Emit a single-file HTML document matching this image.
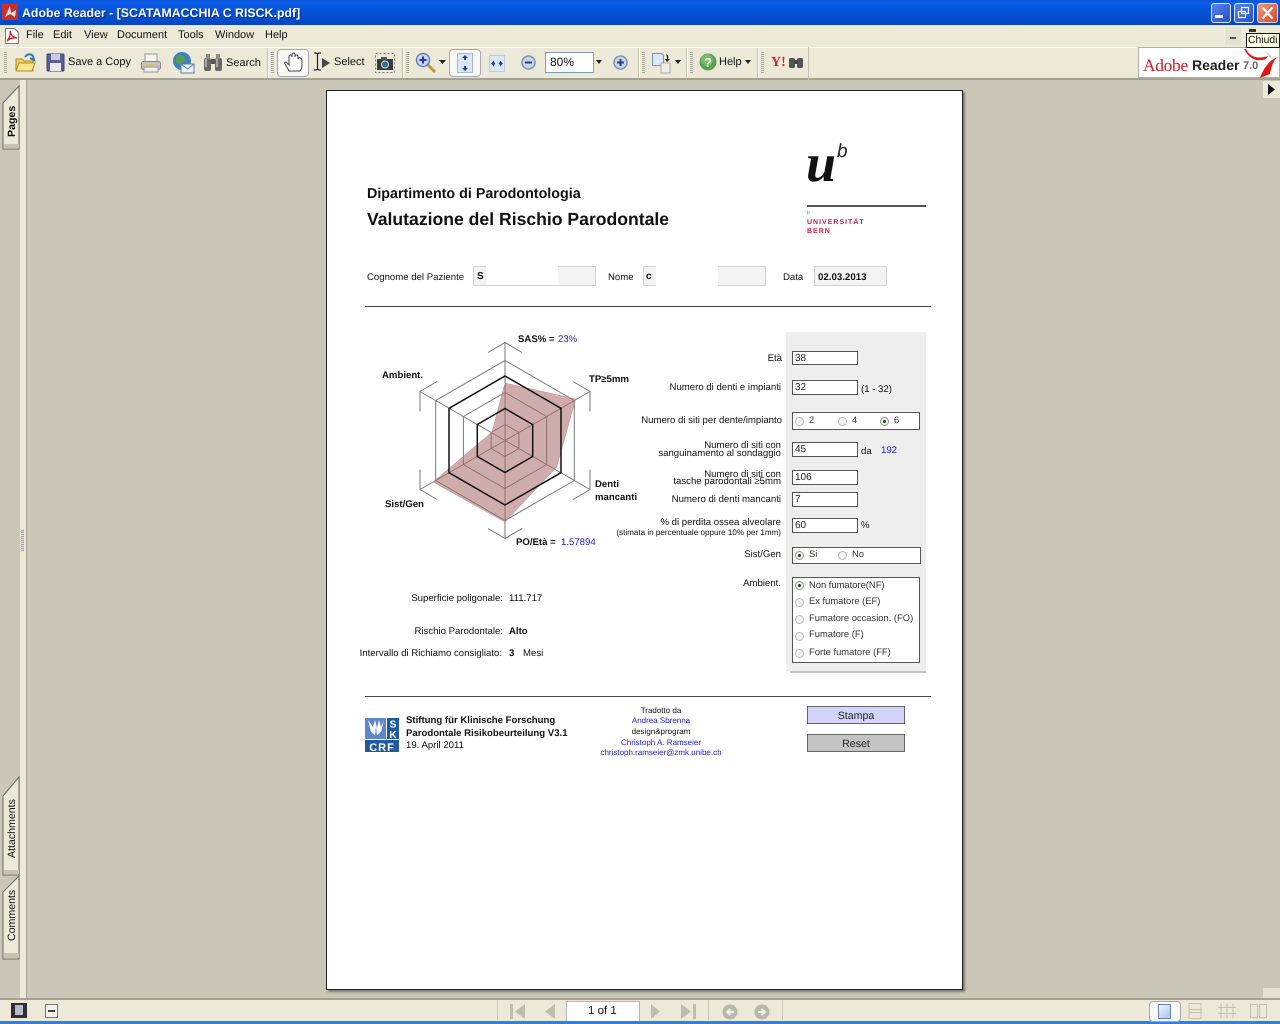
<!DOCTYPE html>
<html><head><meta charset="utf-8"><title>Adobe Reader</title>
<style>
html,body{margin:0;padding:0;width:1280px;height:1024px;overflow:hidden;background:#CBC7B8;font-family:"Liberation Sans",sans-serif;text-rendering:geometricPrecision;}
.a{position:absolute;}
.t{position:absolute;white-space:nowrap;color:#111;font-size:9.6px;line-height:12px;}
.r{text-align:right;}
.b{font-weight:bold;}
.blue{color:#2222cc;}
.ui{font-size:11px;color:#111;}
.fld{position:absolute;background:#fff;border:1px solid #555;box-sizing:border-box;font-size:10px;line-height:13px;padding-left:2px;color:#222;}
.rad{position:absolute;width:9px;height:9px;border-radius:50%;border:1px solid #bbb;background:#f3f3f3;box-sizing:border-box;}
.on{border-color:#8a9a8a;}
.on:after{content:"";position:absolute;left:2px;top:2px;width:3px;height:3px;border-radius:50%;background:#1c3c1c;}
.sep{position:absolute;top:48px;height:30px;width:1px;background:#c5c2b2;border-right:1px solid #fff;}
.grip{position:absolute;top:52px;height:22px;width:3px;background:repeating-linear-gradient(#aaa79a 0 1px,transparent 1px 2px);}
.vt{position:absolute;white-space:nowrap;transform-origin:0 0;transform:rotate(-90deg);font-size:10.6px;color:#111;line-height:14px;}
.l{color:#333;font-size:9.4px;}
</style></head><body>

<!-- title bar -->
<div class="a" style="left:0;top:0;width:1280px;height:25px;background:linear-gradient(#0a56dc 0,#0a5ce8 3px,#0453d8 12px,#0148c8 22px,#0a45b5 25px);"></div>
<svg class="a" style="left:2px;top:4px" width="16" height="16" viewBox="0 0 16 16"><rect width="16" height="16" fill="#c8302a"/><path d="M3 13 L8 2 L9 9 L14 6 L13 13 L8 10 Z" fill="#f2e0d8"/></svg>
<div class="t b" style="left:22px;top:5px;font-size:12.35px;line-height:16px;color:#fff;text-shadow:1px 1px 0 #0a2f8c;">Adobe Reader - [SCATAMACCHIA C RISCK.pdf]</div>
<div class="a" style="left:1211px;top:3px;width:20px;height:20px;border-radius:3px;border:1px solid #dfe8fa;box-sizing:border-box;background:linear-gradient(135deg,#5a83ec,#2450cc);"></div>
<div class="a" style="left:1215px;top:15px;width:8px;height:3px;background:#fff;"></div>
<div class="a" style="left:1234px;top:3px;width:20px;height:20px;border-radius:3px;border:1px solid #dfe8fa;box-sizing:border-box;background:linear-gradient(135deg,#5a83ec,#2450cc);"></div>
<svg class="a" style="left:1237px;top:6px" width="14" height="14"><path d="M4.5 1.5h7v6h-7zM1.5 5.5h7v6h-7z" fill="none" stroke="#fff" stroke-width="1.2"/></svg>
<div class="a" style="left:1257px;top:3px;width:21px;height:20px;border-radius:3px;border:1px solid #f5e0da;box-sizing:border-box;background:linear-gradient(135deg,#ee9a7e,#d9482a);"></div>
<svg class="a" style="left:1260px;top:6px" width="15" height="14"><path d="M2.5 1.5L12.5 12.5M12.5 1.5L2.5 12.5" stroke="#fff" stroke-width="2.2"/></svg>

<!-- menu -->
<div class="a" style="left:0;top:25px;width:1280px;height:22px;background:#ECE9D8;"></div>
<svg class="a" style="left:4px;top:27px" width="16" height="18" viewBox="0 0 16 18"><path d="M1.5 1.5h9l4 4v11h-13z" fill="#fff" stroke="#777"/><path d="M3 14 Q7 9 6 4 Q7 10 13 11 Q7 10 3 14z" fill="none" stroke="#d02020" stroke-width="1.3"/></svg>
<div class="t ui" style="left:26px;top:29px">File</div>
<div class="t ui" style="left:53px;top:29px">Edit</div>
<div class="t ui" style="left:84px;top:29px">View</div>
<div class="t ui" style="left:117px;top:29px">Document</div>
<div class="t ui" style="left:178px;top:29px">Tools</div>
<div class="t ui" style="left:215px;top:29px">Window</div>
<div class="t ui" style="left:265px;top:29px">Help</div>
<div class="a" style="left:1225px;top:27px;width:16px;height:18px;background:#e4e1d0;"></div>
<div class="a" style="left:1230px;top:37px;width:6px;height:2px;background:#555;"></div>
<div class="a" style="left:1249px;top:29px;width:7px;height:3px;background:#333;"></div>

<!-- toolbar -->
<div class="a" style="left:0;top:47px;width:1280px;height:33px;background:#ECE9D8;border-top:1px solid #fff;border-bottom:2px solid #a5a292;box-sizing:border-box;"></div>
<div class="grip" style="left:4px"></div>
<svg class="a" style="left:14px;top:51px" width="22" height="22" viewBox="0 0 22 22"><path d="M2 8h6l2 2h9v10H2z" fill="#f2d060" stroke="#b08a20"/><path d="M2 20l3-8h16l-3 8z" fill="#fbe68c" stroke="#b08a20"/><path d="M11 6Q15 1 19 5l1 4-4-2" fill="none" stroke="#2f7fae" stroke-width="2"/></svg>
<svg class="a" style="left:46px;top:53px" width="19" height="19" viewBox="0 0 19 19"><rect x="1" y="1" width="17" height="17" rx="1" fill="#5a5f9a" stroke="#3d4070"/><rect x="5" y="1" width="9" height="6" fill="#c9cce4"/><rect x="4" y="10" width="11" height="8" fill="#e8e8ee"/></svg>
<div class="t ui" style="left:68px;top:56px">Save a Copy</div>
<svg class="a" style="left:140px;top:52px" width="22" height="22" viewBox="0 0 22 22"><rect x="5" y="2" width="12" height="8" fill="#f4f4f4" stroke="#999"/><rect x="1.500" y="9.500" width="19" height="8" rx="2" fill="#c6c6c6" stroke="#888"/><rect x="4" y="15" width="14" height="5" fill="#eee" stroke="#999"/><rect x="6" y="12" width="8" height="2" fill="#e0c040"/></svg>
<svg class="a" style="left:172px;top:51px" width="23" height="23" viewBox="0 0 23 23"><circle cx="10" cy="10" r="9" fill="#3f80c4"/><path d="M4 6q5-4 8 0t-3 6-5-6z" fill="#5aa04a"/><rect x="9" y="13" width="13" height="9" fill="#eef3fa" stroke="#5b7ea8"/><path d="M9 13l6.500 5 6.500-5" fill="none" stroke="#5b7ea8"/></svg>
<svg class="a" style="left:203px;top:53px" width="20" height="19" viewBox="0 0 20 19"><rect x="1" y="5" width="7" height="13" rx="2" fill="#6a6a62"/><rect x="12" y="5" width="7" height="13" rx="2" fill="#6a6a62"/><rect x="3" y="1" width="4" height="5" fill="#8c8c82"/><rect x="13" y="1" width="4" height="5" fill="#8c8c82"/><rect x="8" y="6" width="4" height="5" fill="#555"/><rect x="2" y="6" width="2" height="8" fill="#aaa"/><rect x="13" y="6" width="2" height="8" fill="#aaa"/></svg>
<div class="t ui" style="left:226px;top:57px">Search</div>
<div class="sep" style="left:267px"></div>
<div class="grip" style="left:271px"></div>
<div class="a" style="left:277px;top:49px;width:32px;height:28px;background:#f8f8f4;border:1px solid #a8a8b4;border-radius:4px;box-sizing:border-box;"></div>
<svg class="a" style="left:282px;top:52px" width="22" height="22" viewBox="0 0 22 22"><path d="M7 19Q5 15 3 12q-1-2 1-2l3 3V5q0-2 1.500-2T10 5V3q0-2 1.500-2T13 3v2q0-2 1.500-2T16 5v2q1-2 2.500-1T20 8v5q0 4-2 6z" fill="#fff" stroke="#444" stroke-width="1"/></svg>
<svg class="a" style="left:312px;top:52px" width="20" height="20" viewBox="0 0 20 20"><path d="M2 1h2l1.500 1L7 1h2M5.500 2v15M2 18h2l1.500-1L7 18h2" fill="none" stroke="#222" stroke-width="1.200"/><path d="M10 6l8 5-8 5z" fill="#444"/></svg>
<div class="t ui" style="left:334px;top:56px">Select</div>
<svg class="a" style="left:375px;top:53px" width="20" height="20" viewBox="0 0 20 20"><rect x=".5" y=".5" width="19" height="19" fill="none" stroke="#777" stroke-dasharray="2 2"/><rect x="2" y="6" width="16" height="11" fill="#3a3a3a"/><rect x="6" y="4" width="6" height="3" fill="#555"/><circle cx="10" cy="11.500" r="3.500" fill="#2d6d9a" stroke="#ddd"/></svg>
<div class="sep" style="left:402px"></div>
<div class="grip" style="left:406px"></div>
<svg class="a" style="left:415px;top:52px" width="22" height="22" viewBox="0 0 22 22"><path d="M12 12l8 8" stroke="#b89b30" stroke-width="3"/><circle cx="8" cy="8" r="6.500" fill="#c8d8f4" stroke="#6b82b8" stroke-width="1.500"/><path d="M4.500 8h7M8 4.500v7" stroke="#233a8c" stroke-width="2"/></svg>
<svg class="a" style="left:439px;top:60px" width="7" height="4"><path d="M0 0h7L3.500 4z" fill="#222"/></svg>
<div class="a" style="left:449px;top:49px;width:32px;height:28px;background:#f8f8f4;border:1px solid #a8a8b4;border-radius:4px;box-sizing:border-box;"></div>
<svg class="a" style="left:457px;top:53px" width="16" height="20" viewBox="0 0 16 20"><rect x=".5" y=".5" width="15" height="19" fill="#dbe6f6" stroke="#aab8cc"/><path d="M8 2l-3 3h2v2h2V5h2zM8 18l-3-3h2v-2h2v2h2z" fill="#26477c"/></svg>
<svg class="a" style="left:489px;top:55px" width="16" height="17" viewBox="0 0 16 17"><rect x=".5" y=".5" width="15" height="16" fill="#dbe6f6" stroke="#c0cce0"/><path d="M2 8.500l3-3v2h1v2H5v2zM14 8.500l-3-3v2h-1v2h1v2z" fill="#26477c"/></svg>
<svg class="a" style="left:521px;top:55px" width="15" height="15"><circle cx="7.500" cy="7.500" r="6.500" fill="#c8d6ea" stroke="#7d92b8" stroke-width="1.500"/><path d="M4 7.500h7" stroke="#2a3f7a" stroke-width="2"/></svg>
<div class="a" style="left:545px;top:52px;width:49px;height:21px;background:#fff;border:1px solid #7f9db9;box-sizing:border-box;"></div>
<div class="t ui" style="left:550px;top:56px;font-size:12px;line-height:13px">80%</div>
<svg class="a" style="left:596px;top:60px" width="6" height="4"><path d="M0 0h6L3 4z" fill="#222"/></svg>
<svg class="a" style="left:613px;top:55px" width="15" height="15"><circle cx="7.500" cy="7.500" r="6.500" fill="#c8d6ea" stroke="#7d92b8" stroke-width="1.500"/><path d="M4 7.500h7M7.500 4v7" stroke="#2a3f7a" stroke-width="2"/></svg>
<div class="sep" style="left:638px"></div>
<div class="grip" style="left:642px"></div>
<svg class="a" style="left:651px;top:52px" width="22" height="22" viewBox="0 0 22 22"><path d="M1.500 1.500h9l2 2v10h-11z" fill="#dbe6f6" stroke="#7d92b8"/><path d="M10 11h9v10H10z" fill="#f0eee4" stroke="#aaa"/><path d="M15 2q3 1 2 5l2 0-3 3-2-3h2q0-3-1-5z" fill="#222"/></svg>
<svg class="a" style="left:675px;top:60px" width="6" height="4"><path d="M0 0h6L3 4z" fill="#222"/></svg>
<div class="sep" style="left:686px"></div>
<div class="grip" style="left:690px"></div>
<svg class="a" style="left:699px;top:53px" width="18" height="18"><circle cx="9" cy="9" r="8.500" fill="#5aa050"/><circle cx="8" cy="7" r="6" fill="#8ccb7c" opacity=".6"/><text x="9" y="14" text-anchor="middle" font-size="13" font-weight="bold" font-family="Liberation Sans" fill="#fff">?</text></svg>
<div class="t ui" style="left:719px;top:56px">Help</div>
<svg class="a" style="left:745px;top:60px" width="6" height="4"><path d="M0 0h6L3 4z" fill="#222"/></svg>
<div class="sep" style="left:757px"></div>
<div class="grip" style="left:761px"></div>
<div class="t b" style="left:771px;top:55px;font-family:'Liberation Serif',serif;font-size:14px;line-height:15px;color:#d81e2c">Y!</div>
<svg class="a" style="left:789px;top:55px" width="14" height="14" viewBox="0 0 14 14"><rect x="0" y="3" width="6" height="10" rx="1.500" fill="#555"/><rect x="8" y="3" width="6" height="10" rx="1.500" fill="#555"/><rect x="5" y="5" width="4" height="4" fill="#444"/></svg>
<div class="a" style="left:808px;top:47px;width:1px;height:33px;background:#c5c2b2;"></div>

<!-- adobe reader badge -->
<div class="a" style="left:1138px;top:47px;width:142px;height:31px;background:#fff;border:1px solid #b5b2a5;box-sizing:border-box;overflow:hidden;"></div>
<div class="t" style="left:1143px;top:56px;font-family:'Liberation Serif',serif;font-size:17.4px;line-height:19px;color:#c8202c;letter-spacing:-.3px">Adobe</div>
<div class="t b" style="left:1192px;top:57px;font-size:14px;line-height:17px;color:#222">Reader</div>
<div class="t b" style="left:1243px;top:60px;font-size:11px;line-height:13px;color:#666">7.0</div>
<svg class="a" style="left:1240px;top:47px" width="40" height="32" viewBox="0 0 40 32"><path d="M6 2Q12 14 28 9L26 12Q12 17 4 2z" fill="#e01818"/><path d="M38 10Q32 14 30 27L20 31Q26 14 38 10z" fill="#e01818"/><path d="M24 2l8 8-2 1z" fill="#ccc"/></svg>

<!-- tooltip -->
<div class="a" style="left:1246px;top:33px;width:34px;height:15px;background:#ffffe1;border:1px solid #111;box-sizing:border-box;"></div>
<div class="t" style="left:1248px;top:34px;font-size:10.4px;line-height:13px;color:#111">Chiudi</div>

<!-- left panel -->
<div class="a" style="left:20px;top:80px;width:7px;height:918px;background:#ECE9D8;border-right:1px solid #a5a292;box-sizing:border-box;"></div>
<svg class="a" style="left:0;top:80px" width="21" height="880" viewBox="0 0 21 880">
<path d="M3 23L19 6V69H3z" fill="#ECE9D8" stroke="#6a6a60"/>
<rect x="4" y="64" width="15" height="4" fill="#c6c3b3"/>
<path d="M3 716L19 697V795H3z" fill="#ECE9D8" stroke="#6a6a60"/>
<rect x="4" y="790" width="15" height="4" fill="#c6c3b3"/>
<path d="M3 812L19 796V879H3z" fill="#ECE9D8" stroke="#6a6a60"/>
<rect x="4" y="873" width="15" height="5" fill="#c6c3b3"/>
</svg>
<div class="vt b" style="left:5px;top:137px;line-height:14px;">Pages</div>
<div class="vt" style="left:5px;top:858px;">Attachments</div>
<div class="vt" style="left:5px;top:941px;">Comments</div>
<div class="a" style="left:21px;top:530px;width:3px;height:22px;background:repeating-linear-gradient(#999 0 1px,transparent 1px 2px);"></div>

<!-- right scroll -->
<div class="a" style="left:1263px;top:81px;width:17px;height:17px;background:#ECE9D8;"></div>
<svg class="a" style="left:1268px;top:84px" width="8" height="11"><path d="M0 0l7 5.500L0 11z" fill="#111"/></svg>
<div class="a" style="left:1263px;top:988px;width:17px;height:10px;background:#e4e1d2;"></div>

<!-- bottom bar -->
<div class="a" style="left:0;top:998px;width:1280px;height:23px;background:#ECE9D8;border-top:2px solid #a5a292;box-sizing:border-box;"></div>
<div class="a" style="left:0;top:1021px;width:1280px;height:3px;background:#2f80dc;"></div>
<svg class="a" style="left:11px;top:1003px" width="16" height="15"><rect width="16" height="15" fill="#2e2e36"/><rect x="4" y="2" width="8" height="10" fill="#b8bcc8"/></svg>
<svg class="a" style="left:45px;top:1004px" width="13" height="14"><rect x=".5" y=".5" width="12" height="13" fill="#f3f3ee" stroke="#777"/><path d="M3 7h7" stroke="#444" stroke-width="2"/></svg>
<div class="a" style="left:497px;top:1000px;width:1px;height:20px;background:#c8c5b5;"></div>
<div class="a" style="left:782px;top:1000px;width:1px;height:20px;background:#c8c5b5;"></div>
<div class="a" style="left:708px;top:1000px;width:1px;height:20px;background:#c8c5b5;"></div>
<svg class="a" style="left:510px;top:1004px" width="190" height="15" fill="#bdbdb0">
<rect x="0" y="0" width="3" height="15"/><path d="M15 0v15L5 7.500z"/>
<path d="M45 0v15L35 7.500z"/>
<path d="M141 0v15l9-7.500z"/>
<path d="M171 0v15l10-7.500z"/><rect x="183" y="0" width="3" height="15"/>
</svg>
<div class="a" style="left:566px;top:1001px;width:74px;height:20px;background:#fff;border:1px solid #a8b8c8;border-bottom:none;box-sizing:border-box;"></div>
<div class="t ui" style="left:588px;top:1005px;font-size:11.500px;line-height:13px">1 of 1</div>
<svg class="a" style="left:722px;top:1004px" width="50" height="16"><circle cx="8" cy="8" r="7.500" fill="#b8b8aa"/><path d="M12 8H6m2.500-3L5 8l3.500 3" stroke="#f0efe6" stroke-width="2" fill="none"/><circle cx="40" cy="8" r="7.500" fill="#b8b8aa"/><path d="M36 8h6m-2.500-3L43 8l-3.500 3" stroke="#f0efe6" stroke-width="2" fill="none"/></svg>
<div class="a" style="left:1149px;top:1001px;width:32px;height:21px;background:#f8f8f4;border:1px solid #a8a8b4;border-radius:4px;box-sizing:border-box;"></div>
<div class="a" style="left:1158px;top:1004px;width:13px;height:15px;background:linear-gradient(135deg,#f0f5fb,#a8c4e8);border:1px solid #6a86ac;box-sizing:border-box;"></div>
<svg class="a" style="left:1188px;top:1003px" width="86" height="16" fill="none" stroke="#c2c0b2"><path d="M1 .5h12M1 6.500h12v3H1zM1 15.500h12M1 .5v15M13 .5v15"/><path d="M33 .5v15M39 .5v15M45 .5v15M30 4.500h18M30 10.500h18"/><rect x="62.500" y="1.500" width="7" height="13"/><rect x="71.500" y="1.500" width="7" height="13"/></svg>

<!-- PAGE -->
<div class="a" style="left:326px;top:90px;width:637px;height:900px;background:#fff;border:1px solid #222;box-sizing:border-box;box-shadow:2px 2px 2px rgba(60,60,50,.55);"></div>

<div class="t b" style="left:367px;top:186px;font-size:14.3px;line-height:16px;color:#111;">Dipartimento di Parodontologia</div>
<div class="t b" style="left:367px;top:209px;font-size:17.6px;line-height:20px;color:#111;">Valutazione del Rischio Parodontale</div>

<!-- Uni Bern logo -->
<div class="t b" style="left:806px;top:138px;font-family:'Liberation Serif',serif;font-style:italic;font-size:54px;line-height:50px;color:#111;">u</div>
<div class="t" style="left:837px;top:142px;font-family:'Liberation Sans',sans-serif;font-style:italic;font-size:19px;line-height:20px;color:#222;">b</div>
<div class="a" style="left:807px;top:205px;width:119px;height:2px;background:#555;"></div>
<div class="t" style="left:807px;top:210px;font-size:5px;line-height:6px;color:#777;">b</div>
<div class="t b" style="left:807px;top:218px;font-size:7px;line-height:9px;color:#c41e50;letter-spacing:1px;">UNIVERSITÄT</div>
<div class="t b" style="left:807px;top:227px;font-size:7px;line-height:9px;color:#c41e50;letter-spacing:1px;">BERN</div>

<!-- patient row -->
<div class="t" style="left:367px;top:272px;">Cognome del Paziente</div>
<div class="a" style="left:473px;top:266px;width:123px;height:20px;background:#f3f3f3;border:1px solid #d4d4d4;box-sizing:border-box;"></div>
<div class="a" style="left:486px;top:266px;width:72px;height:19px;background:#fff;"></div>
<div class="t b" style="left:477px;top:271px;font-size:10px;">S</div>
<div class="t" style="left:608px;top:272px;">Nome</div>
<div class="a" style="left:643px;top:266px;width:123px;height:20px;background:#f3f3f3;border:1px solid #d4d4d4;box-sizing:border-box;"></div>
<div class="a" style="left:656px;top:266px;width:62px;height:21px;background:#fff;"></div>
<div class="t b" style="left:646px;top:271px;font-size:10px;">c</div>
<div class="t" style="left:783px;top:272px;">Data</div>
<div class="a" style="left:814px;top:266px;width:73px;height:20px;background:#f3f3f3;border:1px solid #d4d4d4;box-sizing:border-box;"></div>
<div class="t b" style="left:818px;top:272px;font-size:9.7px;">02.03.2013</div>
<div class="a" style="left:365px;top:306px;width:566px;height:1px;background:#44445a;"></div>

<!-- radar -->
<svg class="a" style="left:400px;top:335px" width="210" height="210" viewBox="400 335 210 210">
<g fill="none" stroke="#777" stroke-width="1">
<path d="M505 440.500V342.500M505 440.500L590 391.500M505 440.500L590 489.500M505 440.500V538.500M505 440.500L420 489.500M505 440.500L420 391.500"/>
<path d="M505 424.500L518.900 432.500V448.500L505 456.500L491.100 448.500V432.500Z"/>
<path d="M505 392.500L546.600 416.500V464.500L505 488.500L463.400 464.500V416.500Z"/>
<path d="M505 360.500L574.300 400.500V480.500L505 520.500L435.700 480.500V400.500Z"/>
<path d="M488 352.500L505 342.500L522 352.500M573 381.500L590 391.500V411.500M590 469.500V489.500L573 499.500M522 528.500L505 538.500L488 528.500M437 499.500L420 489.500V469.500M420 411.500V391.500L437 381.500"/>
</g>
<path d="M505 383L575.700 399L556.700 467L505 522L433 482L492 432Z" fill="#a86a6a" fill-opacity=".55" stroke="#b89090" stroke-width=".5"/>
<g fill="none" stroke="#111" stroke-width="1.500">
<path d="M505 408.500L532.700 424.500V456.500L505 472.500L477.300 456.500V424.500Z"/>
<path d="M505 376L561 408.300V472.700L505 505L449 472.700V408.300Z"/>
</g>
</svg>
<div class="t b" style="left:518px;top:334px;">SAS% =</div><div class="t blue" style="left:558px;top:334px;">23%</div>
<div class="t b" style="left:589px;top:374px;">TP≥5mm</div>
<div class="t b" style="left:382px;top:370px;">Ambient.</div>
<div class="t b" style="left:595px;top:479px;">Denti</div>
<div class="t b" style="left:595px;top:492px;">mancanti</div>
<div class="t b" style="left:385px;top:499px;">Sist/Gen</div>
<div class="t b" style="left:516px;top:537px;">PO/Età =</div><div class="t blue" style="left:561px;top:537px;">1.57894</div>

<div class="t r" style="right:777px;top:593px;">Superficie poligonale:</div>
<div class="t" style="left:509px;top:593px;">111.717</div>
<div class="t r" style="right:777px;top:626px;">Rischio Parodontale:</div>
<div class="t b" style="left:509px;top:626px;">Alto</div>
<div class="t r" style="right:778px;top:648px;">Intervallo di Richiamo consigliato:</div>
<div class="t b" style="left:509px;top:648px;">3</div>
<div class="t" style="left:523px;top:648px;">Mesi</div>

<!-- gray form panel -->
<div class="a" style="left:786px;top:332px;width:140px;height:339px;background:#eeeeee;"></div>
<div class="a" style="left:790px;top:671px;width:136px;height:2px;background:#c4c4c4;"></div>

<div class="t r" style="right:498px;top:353px;">Età</div>
<div class="fld" style="left:792px;top:351px;width:66px;height:14px;">38</div>
<div class="t r" style="right:499px;top:382px;">Numero di denti e impianti</div>
<div class="fld" style="left:792px;top:380px;width:66px;height:15px;">32</div>
<div class="t" style="left:861px;top:384px;">(1 - 32)</div>
<div class="t r" style="right:498px;top:415px;">Numero di siti per dente/impianto</div>
<div class="fld" style="left:792px;top:412px;width:128px;height:18px;"></div>
<div class="rad" style="left:795px;top:417px;"></div><div class="t l" style="left:809px;top:414px;">2</div>
<div class="rad" style="left:838px;top:417px;"></div><div class="t l" style="left:852px;top:414px;">4</div>
<div class="rad on" style="left:880px;top:417px;"></div><div class="t l" style="left:894px;top:414px;">6</div>
<div class="t r" style="right:499px;top:440px;">Numero di siti con</div>
<div class="t r" style="right:499px;top:448px;">sanguinamento al sondaggio</div>
<div class="fld" style="left:792px;top:442px;width:66px;height:15px;">45</div>
<div class="t" style="left:861px;top:446px;">da</div>
<div class="t blue" style="left:881px;top:445px;">192</div>
<div class="t r" style="right:499px;top:469px;">Numero di siti con</div>
<div class="t r" style="right:499px;top:476px;">tasche parodontali ≥5mm</div>
<div class="fld" style="left:792px;top:470px;width:66px;height:15px;">106</div>
<div class="t r" style="right:499px;top:494px;">Numero di denti mancanti</div>
<div class="fld" style="left:792px;top:492px;width:66px;height:15px;">7</div>
<div class="t r" style="right:499px;top:517px;">% di perdita ossea alveolare</div>
<div class="t r" style="right:499px;top:527px;font-size:8.1px;">(stimata in percentuale oppure 10% per 1mm)</div>
<div class="fld" style="left:792px;top:518px;width:66px;height:15px;">60</div>
<div class="t" style="left:861px;top:520px;">%</div>
<div class="t r" style="right:499px;top:549px;">Sist/Gen</div>
<div class="fld" style="left:792px;top:547px;width:129px;height:17px;"></div>
<div class="rad on" style="left:795px;top:551px;"></div><div class="t l" style="left:809px;top:548px;">Si</div>
<div class="rad" style="left:838px;top:551px;"></div><div class="t l" style="left:852px;top:548px;">No</div>
<div class="t r" style="right:499px;top:578px;">Ambient.</div>
<div class="fld" style="left:792px;top:577px;width:128px;height:86px;"></div>
<div class="rad on" style="left:795px;top:581px;"></div><div class="t l" style="left:809px;top:579px;">Non fumatore(NF)</div>
<div class="rad" style="left:795px;top:598px;"></div><div class="t l" style="left:809px;top:595px;">Ex fumatore (EF)</div>
<div class="rad" style="left:795px;top:615px;"></div><div class="t l" style="left:809px;top:612px;">Fumatore occasion. (FO)</div>
<div class="rad" style="left:795px;top:632px;"></div><div class="t l" style="left:809px;top:628px;">Fumatore (F)</div>
<div class="rad" style="left:795px;top:649px;"></div><div class="t l" style="left:809px;top:646px;">Forte fumatore (FF)</div>

<!-- footer -->
<div class="a" style="left:365px;top:696px;width:566px;height:1px;background:#44445a;"></div>
<svg class="a" style="left:365px;top:718px" width="34" height="34" viewBox="0 0 34 34"><rect width="34" height="34" fill="#fff"/><rect width="21" height="21" fill="#5f86c8"/><path d="M3 2l3 12 4 3 1-8 1 8 4-3 3-12-3 7-2-7-2 8-2-8-2 7z" fill="#fff"/><rect x="0" y="22" width="34" height="12" fill="#1f5aa0"/><rect x="22" y="0" width="12" height="21" fill="#1f5aa0"/><text x="28" y="9.500" text-anchor="middle" font-size="10" font-weight="bold" font-family="Liberation Sans" fill="#fff">S</text><text x="28" y="20" text-anchor="middle" font-size="10" font-weight="bold" font-family="Liberation Sans" fill="#fff">K</text><text x="17" y="33" text-anchor="middle" font-size="11" font-weight="bold" font-family="Liberation Sans" fill="#fff" letter-spacing="1">CRF</text></svg>
<div class="t b" style="left:406px;top:715px;">Stiftung für Klinische Forschung</div>
<div class="t b" style="left:406px;top:728px;">Parodontale Risikobeurteilung V3.1</div>
<div class="t" style="left:406px;top:740px;">19. April 2011</div>
<div class="t" style="left:561px;width:200px;text-align:center;top:705px;font-size:8px;">Tradotto da</div>
<div class="t blue" style="left:561px;width:200px;text-align:center;top:715px;font-size:8px;">Andrea Sbrenna</div>
<div class="t" style="left:561px;width:200px;text-align:center;top:726px;font-size:8px;">design&amp;program</div>
<div class="t blue" style="left:561px;width:200px;text-align:center;top:737px;font-size:8px;">Christoph A. Ramseier</div>
<div class="t blue" style="left:561px;width:200px;text-align:center;top:747px;font-size:8px;">christoph.ramseier@zmk.unibe.ch</div>
<div class="a" style="left:807px;top:706px;width:98px;height:18px;background:#d4d4fb;border:1px solid #666;box-sizing:border-box;text-align:center;font-size:10.6px;line-height:18px;color:#222;">Stampa</div>
<div class="a" style="left:807px;top:734px;width:98px;height:18px;background:#c4c4c4;border:1px solid #666;box-sizing:border-box;text-align:center;font-size:10.6px;line-height:18px;color:#222;">Reset</div>

</body></html>
